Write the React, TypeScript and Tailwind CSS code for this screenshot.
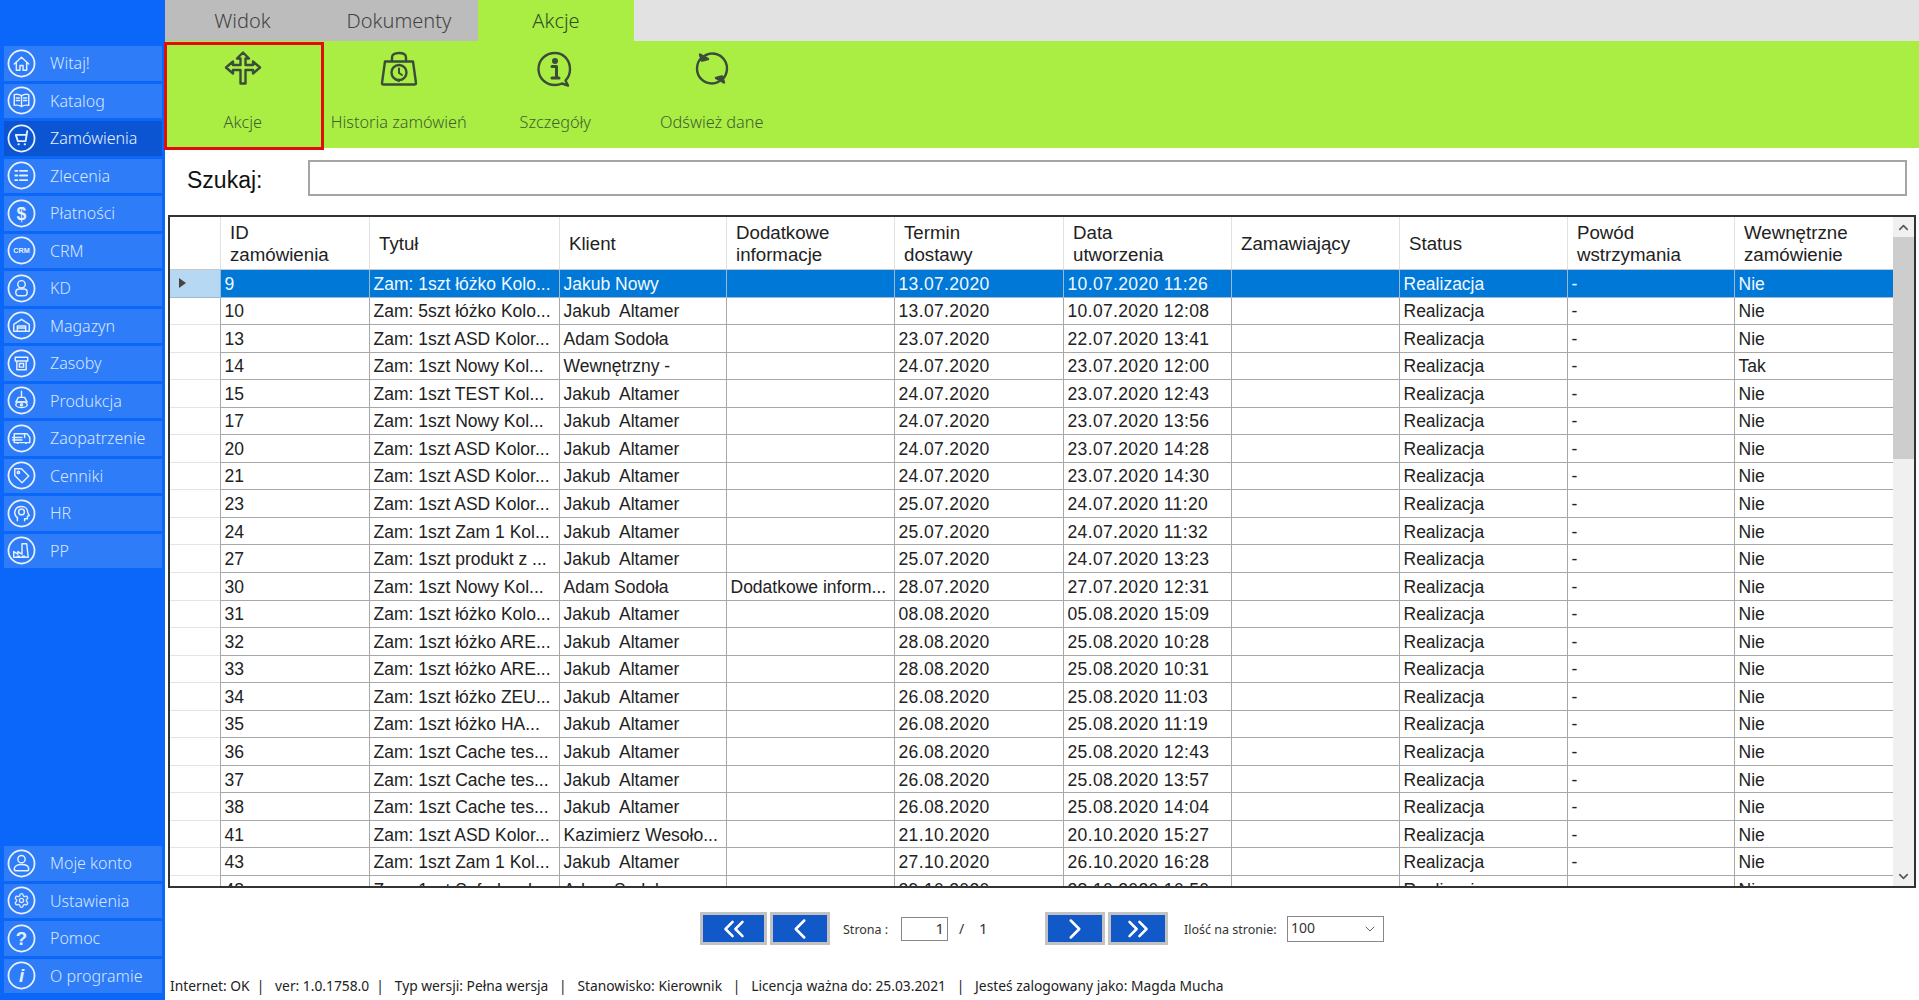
import type { ReactNode } from "react";
import { ChevronLeft, ChevronRight, ChevronsLeft, ChevronsRight, ChevronDown, ChevronUp, Settings } from "lucide-react";

// Sidebar icon: white ring with a small drawing inside
function Ring({ children }: { children: ReactNode }) {
  return (
    <svg width="29" height="29" viewBox="0 0 28 28" fill="none" stroke="#e6f0ff" strokeWidth="1.4" strokeLinecap="round" strokeLinejoin="round" className="shrink-0">
      <circle cx="14" cy="14" r="12.6" strokeWidth="1.7" />
      {children}
    </svg>
  );
}

const glyph = (t: string, size: number, y: number, italic?: boolean) => (
  <text x="14" y={y} textAnchor="middle" fontSize={size} fontWeight="700" fontStyle={italic ? "italic" : "normal"} fontFamily="'Liberation Sans', sans-serif" fill="#e6f0ff" stroke="none">
    {t}
  </text>
);

const icons: Record<string, ReactNode> = {
  home: <path d="M7 14.5 14 8l7 6.5M9 13v7.5h3.5V16h3v4.5H19V13" />,
  book: <path d="M14 9.5C12 8 9.5 7.8 7 8.3v10.4c2.5-.5 5-.3 7 1.2 2-1.5 4.5-1.7 7-1.2V8.3c-2.5-.5-5-.3-7 1.2v10.4M9 11.5h3M9 14h3M16 11.5h3M16 14h3" />,
  cart: <path d="M19.5 7 18 16.5h-7.5L8.5 10.5h10M11 19.5h.5M17 19.5h.5" strokeWidth="1.8" />,
  list: <path d="M8 9.5h2M8 14h2M8 18.5h2M12.5 9.5h7M12.5 14h7M12.5 18.5h7" strokeWidth="1.8" />,
  dollar: glyph("$", 17, 20),
  crm: glyph("CRM", 7, 16.5),
  user: (
    <>
      <circle cx="14" cy="10" r="3.6" />
      <rect x="8.5" y="14.5" width="11" height="6.5" rx="3.2" />
    </>
  ),
  store: <path d="M6.5 13 14 8l7.5 5v6.500h-15zM10 19.500v-5h8v5M10 16.500h8" />,
  box: <path d="M8 8h12v3.500H8zM9.500 11.500V20h9v-8.500M12 14h4v3.500h-4z" />,
  prod: (
    <>
      <path d="M14 5v6M11 11h6l2.500 4.500h-11z" />
      <ellipse cx="14" cy="18" rx="5.5" ry="2.8" />
      <circle cx="14" cy="18" r="1" />
    </>
  ),
  truck: <path d="M7 9.500h12.500L22 13v5H7zM5.500 13h9M5.500 15.500h9M10 18.500h.5M18 18.500h.5M17 10v3" />,
  tag: (
    <>
      <path d="M7.500 7.500H14l7 7-6.500 6.500-7-7z" />
      <circle cx="11" cy="11" r="1.1" />
    </>
  ),
  head: (
    <>
      <path d="M10 21v-3c-2-1.500-2.800-3.500-2.500-5.500C8 9.300 10.500 7.300 14 7.300c3.500 0 6 2.400 6 5.700l1.500 3-1.800.6V19h-2.700v2" />
      <circle cx="14" cy="12.5" r="2.8" />
    </>
  ),
  factory: <path d="M6.500 20.500V15l4 2.500V15l4 2.500V7.500H19l1.500 13zM10 19.500h2M15 19.500h2" />,
  account: (
    <>
      <circle cx="14" cy="9.8" r="3.5" />
      <path d="M7 19.500c0-2.500 2.500-4.500 7-4.500s7 2 7 4.500c0 1-1 1.500-2 1.500H9c-1 0-2-.5-2-1.500z" />
    </>
  ),
  gear: <Settings x="6" y="6" width="16" height="16" strokeWidth={2} />,
  help: glyph("?", 18, 20.5),
  info: glyph("i", 18, 20.5, true),
};

const topNav = [
  { label: "Witaj!", icon: "home" },
  { label: "Katalog", icon: "book" },
  { label: "Zamówienia", icon: "cart", active: true },
  { label: "Zlecenia", icon: "list" },
  { label: "Płatności", icon: "dollar" },
  { label: "CRM", icon: "crm" },
  { label: "KD", icon: "user" },
  { label: "Magazyn", icon: "store" },
  { label: "Zasoby", icon: "box" },
  { label: "Produkcja", icon: "prod" },
  { label: "Zaopatrzenie", icon: "truck" },
  { label: "Cenniki", icon: "tag" },
  { label: "HR", icon: "head" },
  { label: "PP", icon: "factory" },
];

const bottomNav = [
  { label: "Moje konto", icon: "account" },
  { label: "Ustawienia", icon: "gear" },
  { label: "Pomoc", icon: "help" },
  { label: "O programie", icon: "info" },
];

function NavItem({ label, icon, active }: { label: string; icon: string; active?: boolean }) {
  return (
    <div className={`ml-[4px] mr-[3px] flex h-[34.5px] items-center gap-[14px] pl-[3px] text-[16px] font-light ${active ? "bg-[#0b55d2] text-[#eaf2ff]" : "bg-[#2f7cf8] text-[#d8e7ff]"}`}>
      <Ring>{icons[icon]}</Ring>
      <span>{label}</span>
    </div>
  );
}

function Sidebar() {
  return (
    <aside className="flex w-[165px] shrink-0 flex-col justify-between bg-[#0b66fa] pb-[7px] pt-[46px] font-['Noto_Sans',sans-serif]">
      <div className="flex flex-col gap-[3px]">
        {topNav.map((n) => (
          <NavItem key={n.label} {...n} />
        ))}
      </div>
      <div className="flex flex-col gap-[3px]">
        {bottomNav.map((n) => (
          <NavItem key={n.label} {...n} />
        ))}
      </div>
    </aside>
  );
}

const ribbonIcons: Record<string, ReactNode> = {
  move: <path d="M20 2l6 6h-3.500v6.500H30V11l7 6-7 6v-3.500h-7.500V33h-5V19.500H10V23l-7-6 7-6v3.500h7.500V8H14z" />,
  bag: (
    <>
      <path d="M6 11h28l3 21.500c.2 1-.5 1.500-1.500 1.500h-31c-1 0-1.700-.5-1.500-1.500zM13 11V7c0-2.500 2-4.500 7-4.500s7 2 7 4.500v4" />
      <circle cx="20" cy="22" r="7.5" />
      <path d="M20 18v4.500l3 2M17 29l3 1.500" strokeWidth="2" />
    </>
  ),
  info: (
    <>
      <path d="M20 2.500C10.500 2.500 3.500 9.500 3.500 18.500S10.500 34.500 20 34.500c2.500 0 5-.5 7-1.500l6 2-2.500-5c3-3 4.500-7 4.500-11.500 0-9-6.500-16-15-16z" />
      <circle cx="20" cy="10.5" r="1.8" fill="#3c4c3a" />
      <path d="M17 16h4.500v11M17 27.500h7" strokeWidth="3" />
    </>
  ),
  refresh: (
    <>
      <path d="M9 9C12 5 16 3 20 3c8.500 0 15 6.500 15 15 0 5-2.500 9-5 11.500M31 27c-3 4-7 6-11 6-8.500 0-15-6.500-15-15 0-5 2.500-9 5-11.500" />
      <path d="M8 4l2 6 6-1.500zM32 32l-2-6-6 1.500z" fill="#3c4c3a" />
    </>
  ),
};

function RibbonButton({ label, icon, selected }: { label: string; icon: string; selected?: boolean }) {
  return (
    <div className={`flex flex-col items-center text-[16.3px] font-light text-[#3f5f2e] ${selected ? "-ml-[1px] -mr-[3px] mt-[1px] h-[108px] w-[159.5px] border-[3px] border-[#e00d0d] pr-[2px] pt-[5px]" : "h-[107px] w-[156.5px] pt-[9px]"}`}>
      <svg width="40" height="38" viewBox="0 0 40 37" fill="none" stroke="#3c4c3a" strokeWidth="2.4" strokeLinejoin="round" strokeLinecap="round">
        {ribbonIcons[icon]}
      </svg>
      <span className="mt-[22px]">{label}</span>
    </div>
  );
}

function Tabs() {
  return (
    <div className="flex h-[41px] shrink-0 bg-[#e2e2e2] font-['Noto_Sans',sans-serif] text-[20px] font-light">
      <div className="flex w-[155px] items-center justify-center bg-[#bcbcbc] text-[#444]">Widok</div>
      <div className="flex w-[158px] items-center justify-center bg-[#bcbcbc] text-[#444]">Dokumenty</div>
      <div className="flex w-[156px] items-center justify-center bg-[#aaee44] text-[#2f4d28]">Akcje</div>
    </div>
  );
}

function Ribbon() {
  return (
    <div className="flex h-[107px] shrink-0 bg-[#aaee44] font-['Noto_Sans',sans-serif]">
      <RibbonButton label="Akcje" icon="move" selected />
      <RibbonButton label="Historia zamówień" icon="bag" />
      <RibbonButton label="Szczegóły" icon="info" />
      <RibbonButton label="Odśwież dane" icon="refresh" />
    </div>
  );
}

type Row = [string, string, string, string, string, string, string?];

const J = "Jakub  Altamer";
const A = "Adam Sodoła";
const rows: Row[] = [
  ["9", "Zam: 1szt łóżko Kolo...", "Jakub Nowy", "", "13.07.2020", "10.07.2020 11:26"],
  ["10", "Zam: 5szt łóżko Kolo...", J, "", "13.07.2020", "10.07.2020 12:08"],
  ["13", "Zam: 1szt ASD Kolor...", A, "", "23.07.2020", "22.07.2020 13:41"],
  ["14", "Zam: 1szt Nowy Kol...", "Wewnętrzny -", "", "24.07.2020", "23.07.2020 12:00", "Tak"],
  ["15", "Zam: 1szt TEST Kol...", J, "", "24.07.2020", "23.07.2020 12:43"],
  ["17", "Zam: 1szt Nowy Kol...", J, "", "24.07.2020", "23.07.2020 13:56"],
  ["20", "Zam: 1szt ASD Kolor...", J, "", "24.07.2020", "23.07.2020 14:28"],
  ["21", "Zam: 1szt ASD Kolor...", J, "", "24.07.2020", "23.07.2020 14:30"],
  ["23", "Zam: 1szt ASD Kolor...", J, "", "25.07.2020", "24.07.2020 11:20"],
  ["24", "Zam: 1szt Zam 1 Kol...", J, "", "25.07.2020", "24.07.2020 11:32"],
  ["27", "Zam: 1szt produkt z ...", J, "", "25.07.2020", "24.07.2020 13:23"],
  ["30", "Zam: 1szt Nowy Kol...", A, "Dodatkowe inform...", "28.07.2020", "27.07.2020 12:31"],
  ["31", "Zam: 1szt łóżko Kolo...", J, "", "08.08.2020", "05.08.2020 15:09"],
  ["32", "Zam: 1szt łóżko ARE...", J, "", "28.08.2020", "25.08.2020 10:28"],
  ["33", "Zam: 1szt łóżko ARE...", J, "", "28.08.2020", "25.08.2020 10:31"],
  ["34", "Zam: 1szt łóżko ZEU...", J, "", "26.08.2020", "25.08.2020 11:03"],
  ["35", "Zam: 1szt łóżko HA...", J, "", "26.08.2020", "25.08.2020 11:19"],
  ["36", "Zam: 1szt Cache tes...", J, "", "26.08.2020", "25.08.2020 12:43"],
  ["37", "Zam: 1szt Cache tes...", J, "", "26.08.2020", "25.08.2020 13:57"],
  ["38", "Zam: 1szt Cache tes...", J, "", "26.08.2020", "25.08.2020 14:04"],
  ["41", "Zam: 1szt ASD Kolor...", "Kazimierz Wesoło...", "", "21.10.2020", "20.10.2020 15:27"],
  ["43", "Zam: 1szt Zam 1 Kol...", J, "", "27.10.2020", "26.10.2020 16:28"],
  ["48", "Zam: 1szt Safe-hard...", A, "", "29.10.2020", "28.10.2020 10:50"],
];

const columns = ["ID\nzamówienia", "Tytuł", "Klient", "Dodatkowe\ninformacje", "Termin\ndostawy", "Data\nutworzenia", "Zamawiający", "Status", "Powód\nwstrzymania", "Wewnętrzne\nzamówienie"];

const gridCols = "grid grid-cols-[50px_149px_190px_167px_168px_169px_168px_168px_168px_167px_159px]";

function DataGrid() {
  return (
    <div className="mx-[3px] mt-[19px] flex h-[673px] shrink-0 overflow-hidden border-2 border-[#333] font-['Liberation_Sans',Arial,sans-serif] text-[17.5px] text-[#222]">
      <div className="flex w-[1723px] shrink-0 flex-col overflow-hidden">
        <div className={`${gridCols} h-[53px] shrink-0 border-b border-[#c8c8c8] text-[18.7px]`}>
          <div />
          {columns.map((c) => (
            <div key={c} className="flex items-center whitespace-pre-line border-l border-[#e2e2e2] pl-[9px] pt-[2px] leading-[22px]">
              {c}
            </div>
          ))}
        </div>
        <div className="min-h-0 flex-1 overflow-hidden">
          {rows.map((r, i) => {
            const sel = i === 0;
            return (
              <div key={r[0]} className={`${gridCols} h-[27.55px] ${sel ? "text-[#f2f8ff]" : ""}`}>
                <div className={`flex items-center border-b-[1.5px] pl-[9px] ${sel ? "border-[#9db8d0] bg-[#b7d8f2]" : "border-[#e4e4e4]"}`}>
                  {sel && <span className="h-0 w-0 border-y-[5px] border-l-[7px] border-y-transparent border-l-[#444]" />}
                </div>
                {[r[0], r[1], r[2], r[3], r[4], r[5], "", "Realizacja", "-", r[6] ?? "Nie"].map((v, k) => (
                  <div key={k} className={`flex items-center overflow-hidden whitespace-pre border-b-[1.5px] border-l-[1.5px] pl-[3.5px] pt-[1px] ${k === 4 || k === 5 ? "tracking-[0.35px]" : ""} ${sel ? "border-[#9db8d0] bg-[#0078d7]" : "border-[#a8a8a8]"}`}>
                    {v}
                  </div>
                ))}
              </div>
            );
          })}
        </div>
      </div>
      <div className="flex w-[21px] shrink-0 flex-col bg-[#f0f0f0] text-[#555]">
        <div className="flex h-[20px] items-center justify-center">
          <ChevronUp size={15} strokeWidth={2.5} />
        </div>
        <div className="h-[222px] bg-[#cdcdcd]" />
        <div className="flex-1" />
        <div className="flex h-[20px] items-center justify-center">
          <ChevronDown size={15} strokeWidth={2.5} />
        </div>
      </div>
    </div>
  );
}

function PageButton({ children, wide }: { children: ReactNode; wide?: boolean }) {
  return (
    <div className={`flex h-[33px] items-center justify-center overflow-hidden border-[3px] border-[#c2c2c2] bg-[#1158c8] text-white ${wide ? "w-[67px]" : "w-[60px]"}`}>
      {children}
    </div>
  );
}

function Pager() {
  return (
    <div className="ml-[535px] mt-[24px] flex h-[33px] shrink-0 items-center font-['Noto_Sans',sans-serif] text-[12.5px] text-[#333]">
      <PageButton wide>
        <ChevronsLeft size={34} strokeWidth={1.8} />
      </PageButton>
      <div className="ml-[3px]">
        <PageButton>
          <ChevronLeft size={34} strokeWidth={1.8} />
        </PageButton>
      </div>
      <span className="ml-[13px] w-[58px] pt-[4px]">Strona :</span>
      <div className="flex h-[24px] w-[47px] items-center justify-end border border-[#888] bg-white pr-[3px] text-[15px]">1</div>
      <span className="ml-[11px] w-[20px] text-[14px]">/</span>
      <span className="w-[66px] text-[15px]">1</span>
      <PageButton>
        <ChevronRight size={34} strokeWidth={1.8} />
      </PageButton>
      <div className="ml-[3px]">
        <PageButton>
          <ChevronsRight size={34} strokeWidth={1.8} />
        </PageButton>
      </div>
      <span className="ml-[16px] w-[103px] whitespace-nowrap pt-[4px]">Ilość na stronie:</span>
      <div className="flex h-[26px] w-[97px] items-center justify-between border border-[#888] bg-white px-[3px] text-[14px]">
        <span className="-mt-[2px]">100</span>
        <ChevronDown size={16} strokeWidth={1.5} className="mr-[2px] text-[#666]" />
      </div>
    </div>
  );
}

function StatusBar() {
  return (
    <div className="mb-[4px] mt-auto flex h-[20px] shrink-0 items-center whitespace-pre pl-[5px] font-['Noto_Sans',sans-serif] text-[13.8px] text-[#222]">
      Internet: OK  |   ver: 1.0.1758.0  |   Typ wersji: Pełna wersja   |   Stanowisko: Kierownik   |   Licencja ważna do: 25.03.2021   |   Jesteś zalogowany jako: Magda Mucha
    </div>
  );
}

export default function App() {
  return (
    <div className="flex h-[1000px] w-[1919px] overflow-hidden bg-white">
      <Sidebar />
      <main className="flex min-w-0 flex-1 flex-col">
        <Tabs />
        <Ribbon />
        <div className="mt-[12px] flex h-[36px] shrink-0 items-center pl-[22px] pr-[12px]">
          <span className="w-[121px] pt-[4px] font-['Liberation_Sans',Arial,sans-serif] text-[23px] text-[#111]">Szukaj:</span>
          <div className="h-full flex-1 border-2 border-[#a5a5a5] bg-white" />
        </div>
        <DataGrid />
        <Pager />
        <StatusBar />
      </main>
    </div>
  );
}
